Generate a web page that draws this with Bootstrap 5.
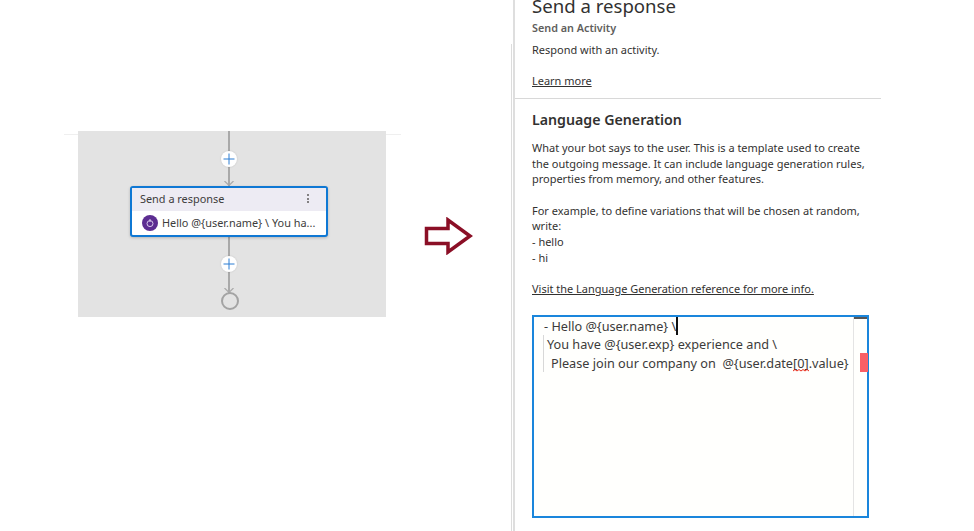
<!doctype html>
<html lang="en"><head><meta charset="utf-8"><title>Send a response</title>
<link href="https://cdn.jsdelivr.net/npm/bootstrap@5.3.0/dist/css/bootstrap.min.css" rel="stylesheet">
<style>
html,body{height:531px;overflow:hidden;background:#fff}
body{font-family:"Noto Sans","Open Sans",sans-serif;color:#323130;font-size:10.97px;line-height:15.6px}
.stage{width:974px;height:531px}
.left-side{width:511px;height:531px;position:relative;flex:none}
.rule{position:absolute;left:64px;top:134px;width:337px;height:1px;background:#efefef}
.canvas{position:absolute;left:78px;top:131px;width:308px;height:186px;background:#e3e3e3}
.wire{position:absolute;left:150px;width:2px;background:#a9a9a9}
.w1{top:0;height:56px}.w2{top:105px;height:58px}
.adder{position:absolute;left:143px;width:16px;height:16px;border-radius:50%;background:#fff;box-shadow:0 0 2px rgba(0,0,0,.15)}
.a1{top:20px}.a2{top:125px}
.adder svg,.chev{position:absolute;display:block}
.adder svg{left:2px;top:2px}
.chev{left:146px}
.c1{top:50px}.c2{top:157px}
.ring{position:absolute;left:143px;top:161px;width:18px;height:18px;border:2.5px solid #a3a3a3;border-radius:50%}
.node{position:absolute;left:52px;top:55px;width:198px;height:51px;border:2px solid #0f78d4;border-radius:3px;background:#fff;box-shadow:0 1px 3px rgba(0,0,0,.2);overflow:hidden}
.node-head{height:23px;background:#edebf3;padding:0 8px 2px;font-size:10.9px;color:#3d3c3b}
.node-body{height:24px;padding:0 0 0 10px;color:#3d3c3b;font-size:10.9px;white-space:nowrap}
.bot{width:16px;height:16px;border-radius:50%;background:#5c2d91;flex:none}
.dots{width:2px;margin-right:9px}
.dots i{display:block;width:2px;height:2px;background:#5f5e5d;margin:1.5px 0;border-radius:50%}
.arrow-zone{position:absolute;left:424px;top:217px}
.divider{position:absolute;left:511px;top:44px;bottom:0;width:1px;background:#dcdcdc}
.panel{width:368px;height:531px;border-left:2px solid #dedede;margin-left:2px;flex:none;overflow:hidden}
.panel-top{border-bottom:1px solid #d8d8d8;padding:0 16px 0 17px;margin-top:-7px;height:106px}
.title{font-size:18.6px;line-height:26px;margin:0;color:#323130;font-weight:400}
.sub{font-weight:600;font-size:10.8px;color:#605e5c;margin:1px 0 6px;line-height:16px}
.para{margin:0;white-space:nowrap}
.lnk{color:#323130;text-decoration:underline}
.learn{margin-top:15px;display:block}
.panel-main{padding:11px 12px 0 17px}
.heading{font-size:14.2px;line-height:20px;font-weight:600;margin:0 0 10px;color:#323130}
.editor{width:337px;height:203px;border:2px solid #1a86dc;background:#fffffd;margin-top:18px;position:relative;font-size:12.7px;line-height:18px;padding:0 0 0 10px;color:#3c3b3a}
.edline{white-space:pre;height:18.5px}
.indent{border-left:1px solid #d8d8d8;margin-left:-1px;padding-left:3px}
.indent2{padding-left:7px}
.caret{display:inline-block;width:1.5px;height:18px;background:#111;vertical-align:top}
.squig{display:inline-block;position:relative}
.squig svg{position:absolute;left:0;bottom:0;display:block}
.gutter{position:absolute;right:0;top:0;bottom:0;width:14px;border-left:1px solid #e4e4e4}
.gutter-top{height:2px;background:#555}
.mark-red{position:absolute;left:6px;top:36px;width:8px;height:19px;background:#f95f66}
</style></head><body>
<div class="stage d-flex">
 <div class="left-side">
  <div class="rule"></div>
  <div class="canvas">
   <div class="wire w1"></div><div class="wire w2"></div>
   <svg class="chev c1" width="10" height="6" viewBox="0 0 10 6"><path d="M.5 0L5 4.500 9.500 0" fill="none" stroke="#a9a9a9" stroke-width="1.200"/></svg>
   <svg class="chev c2" width="10" height="6" viewBox="0 0 10 6"><path d="M.5 0L5 4.500 9.500 0" fill="none" stroke="#a9a9a9" stroke-width="1.200"/></svg>
   <div class="adder a1"><svg width="12" height="12" viewBox="0 0 12 12"><path d="M6 .5v11M.5 6h11" stroke="#2b7cd3" stroke-width="1"/></svg></div>
   <div class="adder a2"><svg width="12" height="12" viewBox="0 0 12 12"><path d="M6 .5v11M.5 6h11" stroke="#2b7cd3" stroke-width="1"/></svg></div>
   <div class="ring"></div>
   <div class="node">
    <div class="node-head d-flex align-items-center justify-content-between"><span>Send a response</span><span class="dots"><i></i><i></i><i></i></span></div>
    <div class="node-body d-flex align-items-center gap-1"><span class="bot d-flex align-items-center justify-content-center"><svg width="10" height="10" viewBox="0 0 10 10"><circle cx="5" cy="5.600" r="3" fill="none" stroke="#d9c9ec" stroke-width="1"/><path d="M5 1v3" stroke="#d9c9ec" stroke-width="1"/></svg></span><span>Hello @{user.name} \ You ha...</span></div>
   </div>
  </div>
  <svg class="arrow-zone" width="50" height="38" viewBox="0 0 50 38"><path d="M2.500 11.500H24V3L46 19 24 35V26.500H2.500Z" fill="#fff" stroke="#8b0f26" stroke-width="3.500"/></svg>
  <div class="divider"></div>
 </div>
 <div class="panel">
  <div class="panel-top">
   <h1 class="title">Send a response</h1>
   <div class="sub">Send an Activity</div>
   <p class="para">Respond with an activity.</p>
   <a class="lnk learn" href="#">Learn more</a>
  </div>
  <div class="panel-main">
   <h2 class="heading">Language Generation</h2>
   <p class="para">What your bot says to the user. This is a template used to create<br>the outgoing message. It can include language generation rules,<br>properties from memory, and other features.</p>
   <p class="para mt-3">For example, to define variations that will be chosen at random,<br>write:<br>- hello<br>- hi</p>
   <p class="para mt-3"><a class="lnk" href="#">Visit the Language Generation reference for more info.</a></p>
   <div class="editor">
    <div class="edline">- Hello @{user.name} \<span class="caret"></span></div>
    <div class="edline indent">You have @{user.exp} experience and \</div>
    <div class="edline indent indent2">Please join our company on  @{user.date<span class="squig">[0]<svg width="16" height="3" viewBox="0 0 16 3"><path d="M0 2l2-1.500 2 1.500 2-1.500 2 1.500 2-1.500 2 1.500 2-1.500 2 1.500" fill="none" stroke="#e51400" stroke-width=".9"/></svg></span>.value}</div>
    <div class="gutter"><div class="gutter-top"></div><div class="mark-red"></div></div>
   </div>
  </div>
 </div>
</div>
</body></html>
